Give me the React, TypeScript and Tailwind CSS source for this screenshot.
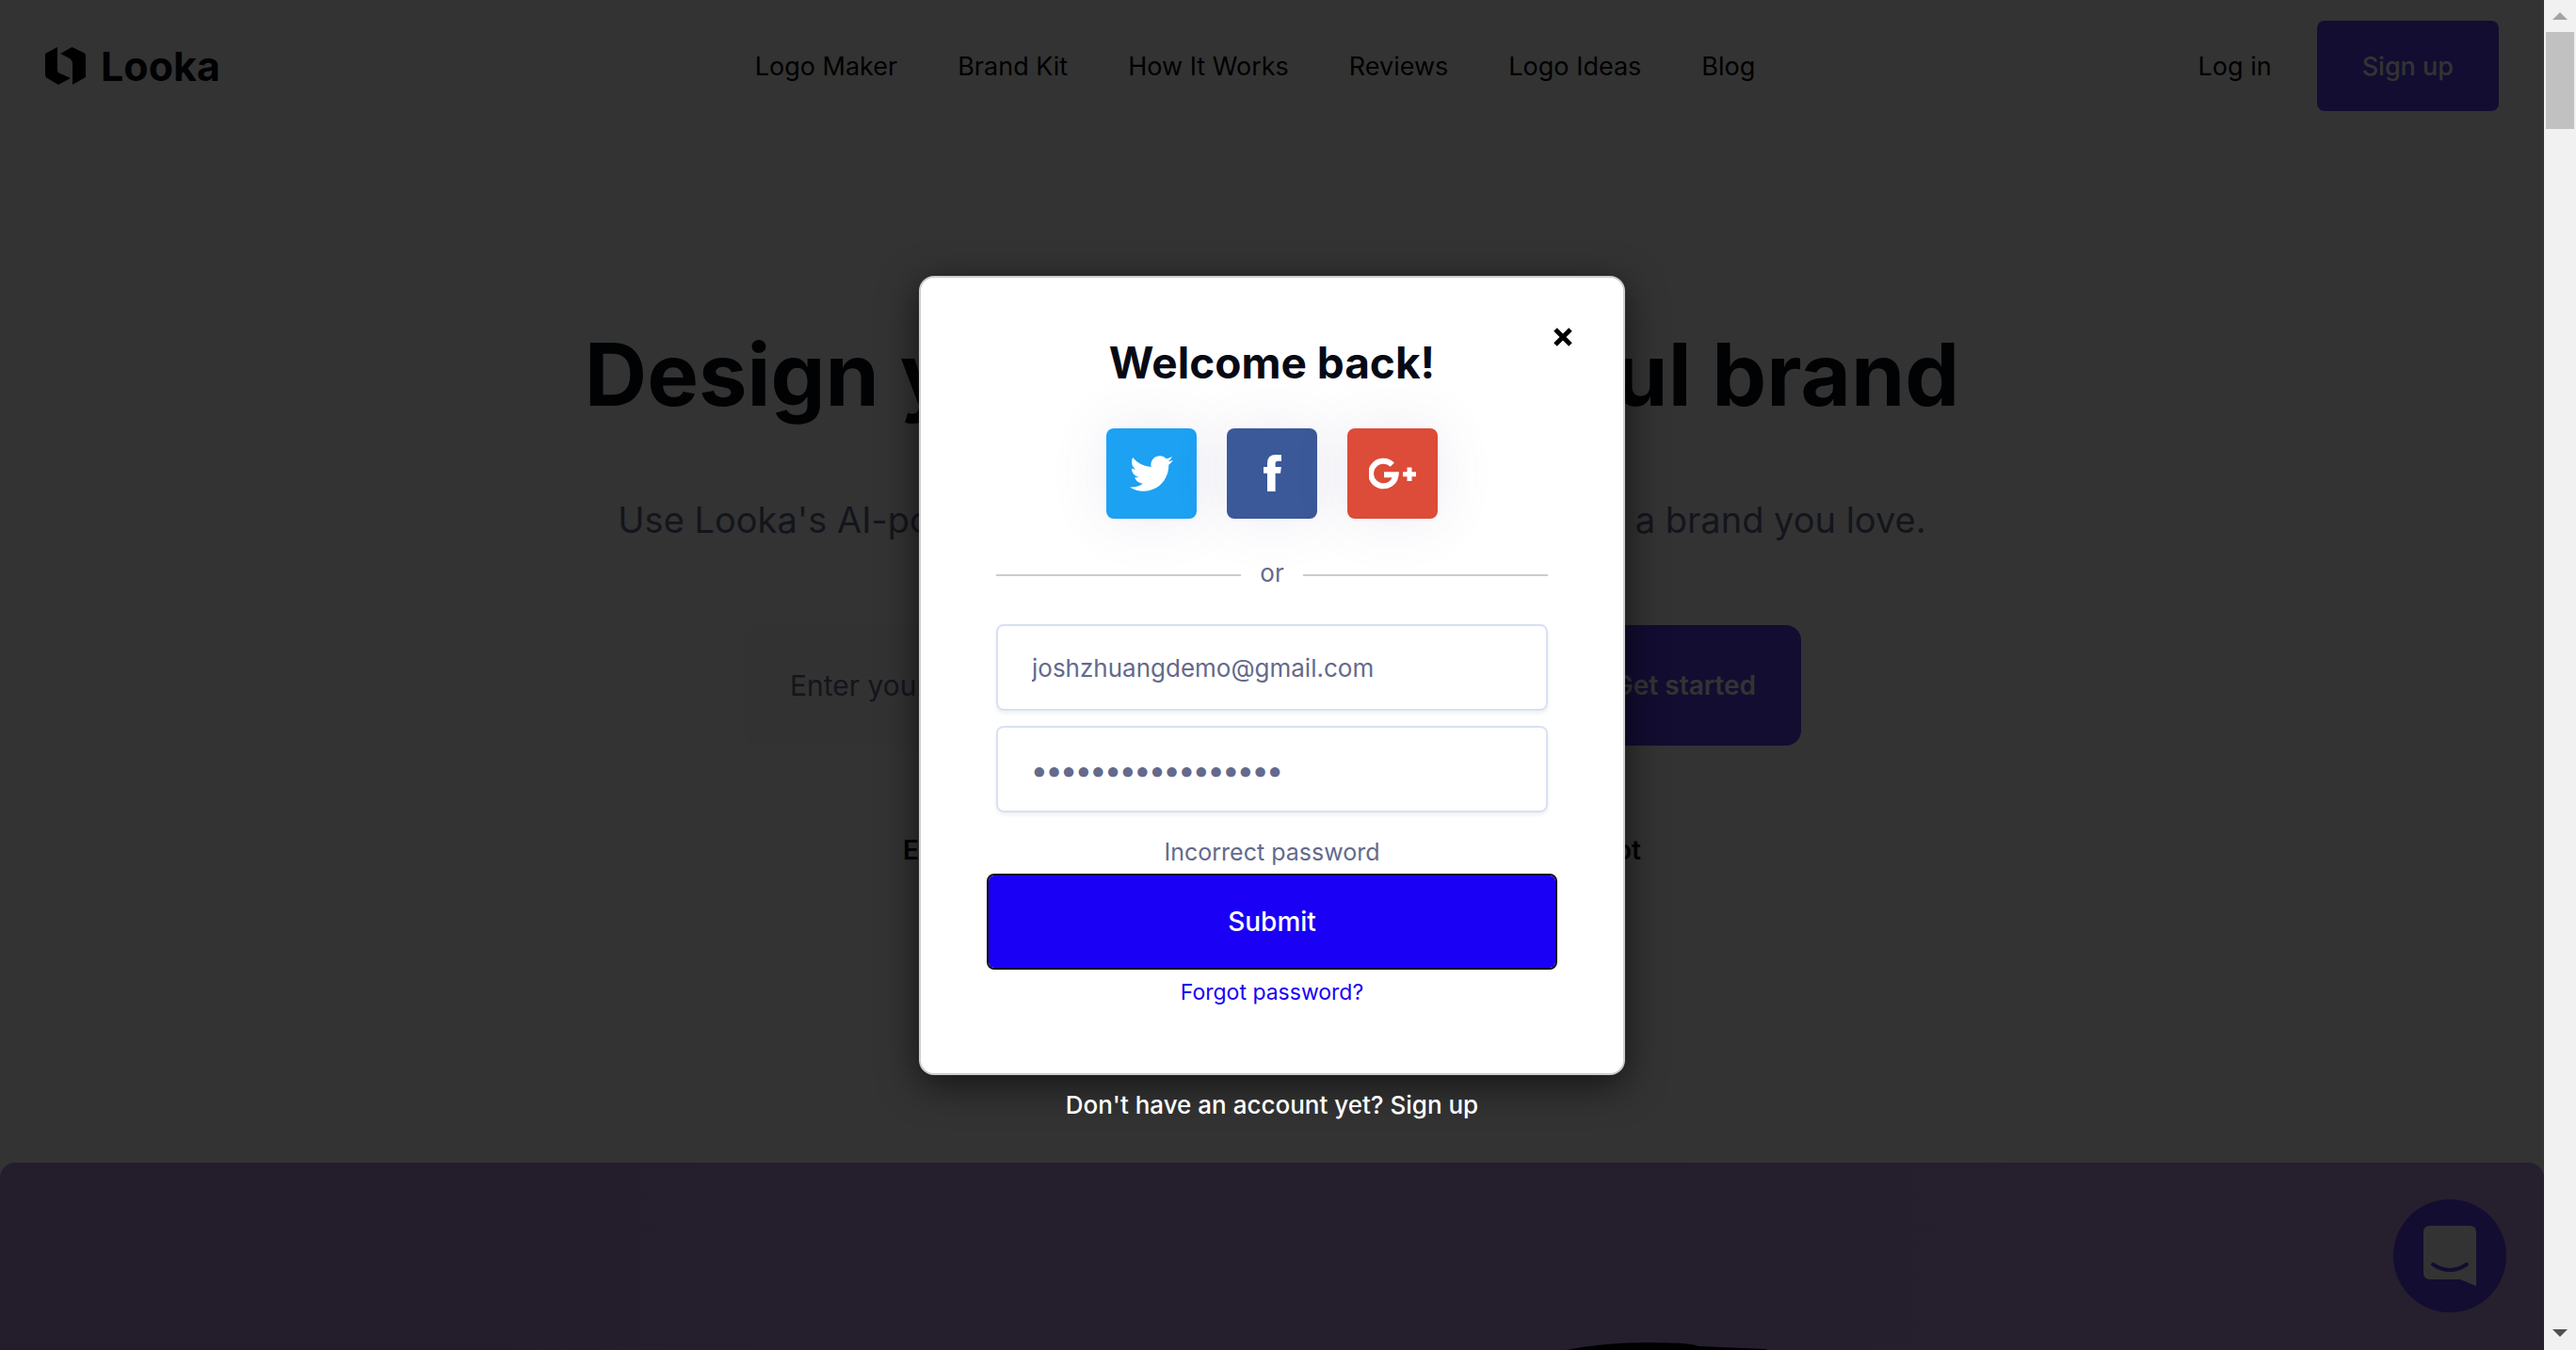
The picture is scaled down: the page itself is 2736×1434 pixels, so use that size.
import { FaTwitter } from "react-icons/fa";

const navItems = ["Logo Maker", "Brand Kit", "How It Works", "Reviews", "Logo Ideas", "Blog"];

function LogoMark() {
  return (
    <svg width="43" height="40" viewBox="0 0 43 40" fill="currentColor" aria-hidden="true">
      <path d="M13 0v24q0 3 3 4l11 5-13 7L2 33q-2-1-2-4V7z" />
      <path d="M28.500 0 41 6q2 1 2 3v23l-14 8V17q0-3-3-5L16 7z" />
    </svg>
  );
}

function FacebookIcon() {
  return (
    <svg width="19" height="39" viewBox="0 0 19 39" fill="currentColor" aria-hidden="true">
      <path d="M19 .3v6.500h-3.700q-2.700 0-2.700 2.700V13h6.200l-.8 6.800h-5.400V39H4V19.800H0V13h4V9q0-9 9-9 4 0 6 .3z" />
    </svg>
  );
}

function GooglePlusIcon() {
  return (
    <svg width="50" height="34" viewBox="0 -1 50 34" fill="none" stroke="currentColor" aria-hidden="true">
      <path d="M24.800 6.600A13.300 13.300 0 1 0 28.600 17.300H16" strokeWidth="6" />
      <path d="M36 16.700h14M43 9.500v14.500" strokeWidth="5" />
    </svg>
  );
}

function Header() {
  return (
    <header className="grid h-[140px] grid-cols-[1fr_auto_1fr] items-center px-12 text-[27px] text-black">
      <a href="#home" className="flex items-center gap-4">
        <LogoMark />
        <span className="text-[43px] leading-none font-bold text-[#070a14]">Looka</span>
      </a>
      <nav className="mr-9 flex gap-16 pt-0.5">
        {navItems.map((item) => (
          <a key={item} href="#nav">
            {item}
          </a>
        ))}
      </nav>
      <div className="flex items-center justify-end gap-12">
        <a href="#login" className="pt-0.5">
          Log in
        </a>
        <button className="h-24 rounded-lg bg-[#5a41f5] px-12 pt-0.5 font-medium text-white">Sign up</button>
      </div>
    </header>
  );
}

function Hero() {
  return (
    <section className="flex flex-col items-center pt-[198px]">
      <h1 className="text-[92px] leading-[120px] font-bold whitespace-nowrap text-[#070a14]">
        Design your own beautiful brand
      </h1>
      <p className="mt-[60px] text-[38px] leading-[68px] whitespace-nowrap text-[#646a8c]">
        Use Looka's AI-powered platform to create a logo and build a brand you love.
      </p>
      <form className="mt-[78px] flex h-32 w-[1124px] overflow-hidden rounded-2xl bg-[#fafafa]">
        <input
          aria-label="Company name"
          placeholder="Enter your company name"
          className="min-w-0 flex-1 px-[50px] text-[30px] placeholder:text-[#646a8c]"
        />
        <button type="button" className="bg-[#5a41f5] px-12 text-[28px] font-semibold text-white">
          Get started
        </button>
      </form>
      <div className="mt-[91px] flex w-[784px] justify-between text-[28px] leading-10 font-semibold text-black">
        <span>Excellent</span>
        <span>Trustpilot</span>
      </div>
    </section>
  );
}

function LoginDialog() {
  return (
    <div className="absolute inset-0 flex flex-col items-center justify-center bg-black/80">
      <div
        role="dialog"
        aria-labelledby="login-title"
        className="relative flex h-[849px] w-[750px] flex-col items-center rounded-2xl border-2 border-[#ccc] bg-white px-20 pt-[60px] shadow-[0_10px_40px_rgba(0,0,0,0.6)]"
      >
        <button aria-label="Close" className="absolute top-[51px] right-[52px] p-0.5">
          <svg width="20" height="20" viewBox="0 0 20 20" stroke="#000" strokeWidth="5">
            <path d="M2 2l16 16M18 2L2 18" />
          </svg>
        </button>
        <h2 id="login-title" className="text-[46px] leading-[60px] font-bold text-[#070a14]">
          Welcome back!
        </h2>
        <div className="mt-10 flex gap-8 text-white">
          <button aria-label="Twitter" className="flex size-24 items-center justify-center rounded-lg bg-[#1da1f2] shadow-[0_0_60px_rgba(100,100,160,0.12)]">
            <FaTwitter size={46} />
          </button>
          <button aria-label="Facebook" className="flex size-24 items-center justify-center rounded-lg bg-[#3b5998] shadow-[0_0_60px_rgba(100,100,160,0.12)]">
            <FacebookIcon />
          </button>
          <button aria-label="Google Plus" className="flex size-24 items-center justify-center rounded-lg bg-[#dd4b39] shadow-[0_0_60px_rgba(100,100,160,0.12)]">
            <GooglePlusIcon />
          </button>
        </div>
        <div className="mt-[38px] flex w-full items-center gap-5 text-[26px] leading-10 text-[#646a8c]">
          <hr className="mt-1 flex-1 border-t-2 border-[#ccc]" />
          or
          <hr className="mt-1 flex-1 border-t-2 border-[#ccc]" />
        </div>
        <form className="mt-[34px] flex w-full flex-col items-center">
          <div className="flex w-full flex-col gap-4">
            <input
              aria-label="Email"
              defaultValue="joshzhuangdemo@gmail.com"
              className="h-[92px] w-full rounded-lg border-2 border-[#d8e0f2] px-9 pt-0.5 text-[26px] text-[#646a8c] shadow-[0_3px_4px_rgba(0,0,0,0.06)]"
            />
            <input
              aria-label="Password"
              type="password"
              defaultValue="incorrectpassword"
              className="h-[92px] w-full rounded-lg border-2 border-[#d8e0f2] px-9 pt-0.5 text-[33px] font-bold text-[#646a8c] shadow-[0_3px_4px_rgba(0,0,0,0.06)]"
            />
          </div>
          <p className="mt-[22px] text-[25px] leading-10 text-[#646a8c]">Incorrect password</p>
          <button type="button" className="mt-[5px] h-[98px] w-[602px] rounded-md bg-[#1a00f5] text-[28px] font-medium text-white outline-2 outline-[#101010]">
            Submit
          </button>
          <a href="#forgot" className="mt-1.5 text-[23px] leading-10 text-[#1a00f5]">
            Forgot password?
          </a>
        </form>
      </div>
      <a href="#signup" className="absolute bottom-[240px] text-[26px] leading-10 font-medium text-white">
        Don't have an account yet? Sign up
      </a>
    </div>
  );
}

function ScrollBar() {
  return (
    <div className="flex w-[34px] flex-col items-center bg-[#f1f1f1] pb-3.5" aria-hidden="true">
      <div className="flex h-[34px] items-center">
        <svg width="16" height="8" viewBox="0 0 16 8" fill="#a3a3a3">
          <path d="M8 0l8 8H0z" />
        </svg>
      </div>
      <div className="h-[103px] w-[30px] bg-[#c1c1c1]" />
      <svg className="mt-auto" width="16" height="8" viewBox="0 0 16 8" fill="#505050">
        <path d="M0 0h16L8 8z" />
      </svg>
    </div>
  );
}

export default function App() {
  return (
    <div className="flex h-screen overflow-hidden font-[Inter,sans-serif]">
      <main className="relative flex flex-1 flex-col overflow-hidden bg-white">
        <Header />
        <Hero />
        <section className="relative mt-auto h-[199px] shrink-0 overflow-hidden rounded-t-2xl bg-linear-to-r from-[#b493dc] to-[#be9bdf]">
          <svg className="absolute bottom-0 left-[1664px]" width="212" height="8" viewBox="0 0 212 8" aria-hidden="true">
            <path d="M0 8Q40 0 85 0T140 4L212 7V8z" fill="#000" />
          </svg>
        </section>
        <button aria-label="Open chat" className="absolute right-10 bottom-10 flex size-[120px] items-center justify-center rounded-full bg-[#5a41f5]">
          <svg width="56" height="64" viewBox="0 0 56 64" aria-hidden="true">
            <path d="M7 0h42q7 0 7 7v57l-17-7H7q-7 0-7-7V7q0-7 7-7z" fill="#fff" />
            <path d="M10 41q18 12 36 0" fill="none" stroke="#5a41f5" strokeWidth="4" strokeLinecap="round" />
          </svg>
        </button>
        <LoginDialog />
      </main>
      <ScrollBar />
    </div>
  );
}
